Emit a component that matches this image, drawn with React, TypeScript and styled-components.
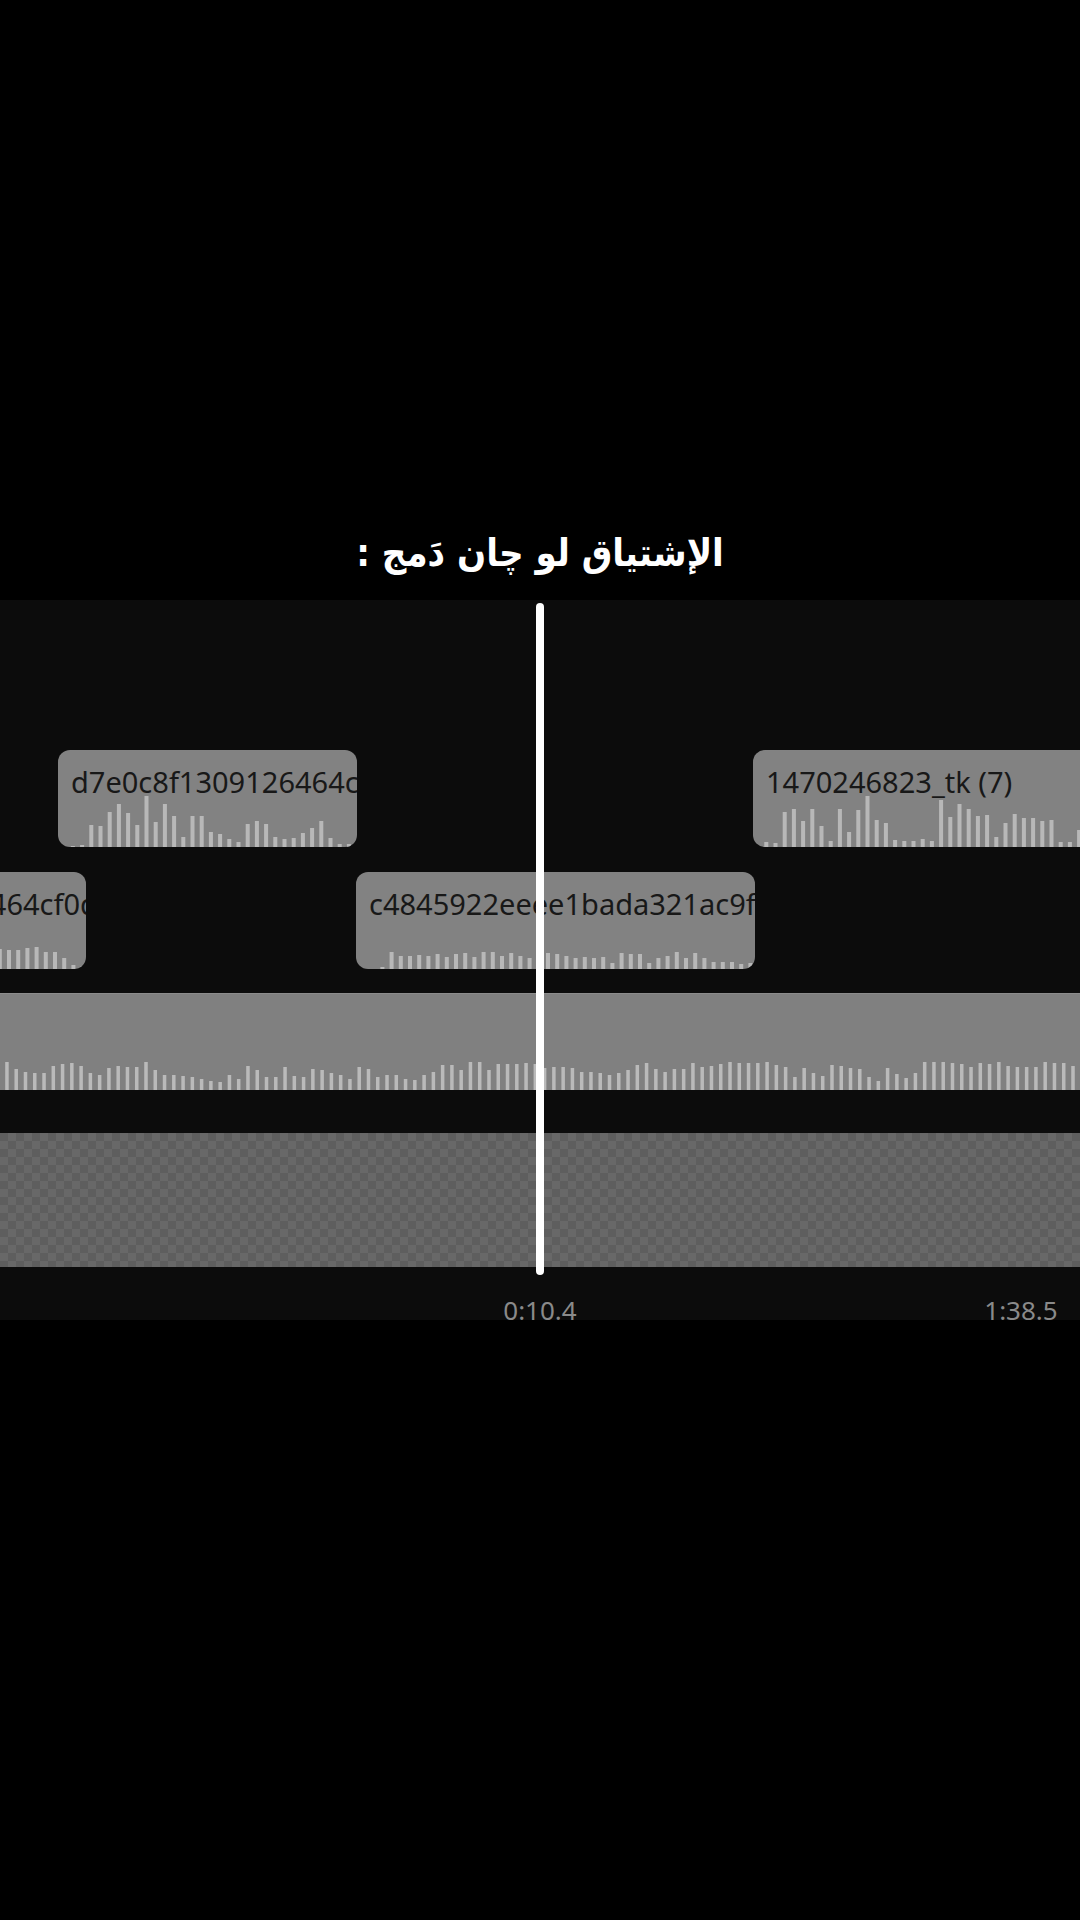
import React from "react";
import styled, { createGlobalStyle } from "styled-components";

const GlobalStyle = createGlobalStyle`
  html, body { margin: 0; padding: 0; background: #000; }
  #root { width: 1080px; height: 1920px; }
`;

const Page = styled.div`
  width: 1080px;
  height: 1920px;
  background: #000;
  display: flex;
  flex-direction: column;
  overflow: hidden;
`;

const Header = styled.div`
  height: 600px;
  display: flex;
  align-items: flex-end;
  justify-content: center;
  padding-bottom: 22px;
  box-sizing: border-box;
`;

const Title = styled.h1`
  margin: 0;
  direction: rtl;
  font-family: "DejaVu Sans Condensed", "DejaVu Sans", sans-serif;
  font-stretch: condensed;
  font-weight: bold;
  font-size: 38px;
  line-height: 1.3;
  color: #fff;
`;

const Panel = styled.div`
  position: relative;
  height: 720px;
  background: #0c0c0c;
  padding-top: 150px;
  box-sizing: border-box;
  display: flex;
  flex-direction: column;
  overflow: hidden;
`;

const ClipRow = styled.div<{ $gap?: number }>`
  position: relative;
  height: 97px;
  margin-top: ${(p) => p.$gap ?? 0}px;
  flex: none;
`;

const Clip = styled.div`
  position: absolute;
  top: 0;
  height: 97px;
  background: #828282;
  border-radius: 12px;
  overflow: hidden;
  display: flex;
  flex-direction: column;
  box-sizing: border-box;
`;

const ClipName = styled.div`
  padding: 17px 0 0 13px;
  font-family: "Noto Sans", "Open Sans", sans-serif;
  font-size: 29px;
  line-height: 29px;
  color: #181818;
  white-space: nowrap;
  flex: none;
`;

const WaveArea = styled.div`
  margin-top: auto;
  height: 51px;
  flex: none;
  svg { display: block; }
`;

const MainTrack = styled.div`
  margin-top: 24px;
  height: 97px;
  flex: none;
  background: #808080;
  border-top: 1px solid #8c8c8c;
  box-sizing: border-box;
  display: flex;
  flex-direction: column;
  justify-content: flex-end;
  svg { display: block; }
`;

const OverlayTrack = styled.div`
  margin-top: 43px;
  height: 134px;
  flex: none;
  background-color: #5e5e5e;
  background-image:
    linear-gradient(45deg, #686868 25%, transparent 25%, transparent 75%, #686868 75%),
    linear-gradient(45deg, #686868 25%, transparent 25%, transparent 75%, #686868 75%);
  background-size: 16px 16px;
  background-position: 0 0, 8px 8px;
`;

const Ruler = styled.div`
  position: relative;
  flex: 1;
`;

const TimeLabel = styled.span`
  position: absolute;
  top: 25px;
  transform: translateX(-50%);
  font-family: "Noto Sans", "Open Sans", sans-serif;
  font-size: 26px;
  color: #8a8a8a;
  white-space: nowrap;
`;

const Playhead = styled.div`
  position: absolute;
  left: 536px;
  top: 3px;
  width: 8px;
  height: 672px;
  background: #fff;
  border-radius: 4px;
`;

type WaveProps = {
  heights: number[];
  start: number;
  step: number;
  barWidth: number;
  width: number;
  height: number;
  color: string;
};

const Wave = ({ heights, start, step, barWidth, width, height, color }: WaveProps) => (
  <svg width={width} height={height} viewBox={`0 0 ${width} ${height}`}>
    {heights.map((h, i) =>
      h > 0 ? (
        <rect
          key={i}
          x={start + i * step}
          y={height - h}
          width={barWidth}
          height={h}
          fill={color}
        />
      ) : null
    )}
  </svg>
);

type ClipData = {
  name: string;
  left: number;
  width: number;
  start: number;
  heights: number[];
};

const row1: ClipData[] = [
  {
    name: "d7e0c8f1309126464cd5a2",
    left: 58,
    width: 299,
    start: 3.7,
    heights: [0, 1, 2, 22, 21, 35, 43, 34, 22, 51, 25, 43, 31, 10, 31, 31, 15, 13, 8, 5, 23, 26, 23, 10, 8, 9, 14, 19, 26, 9, 3, 3, 2],
  },
  {
    name: "1470246823_tk (7)",
    left: 753,
    width: 420,
    start: 2.1,
    heights: [0, 5, 4, 35, 38, 26, 38, 21, 6, 38, 15, 37, 51, 27, 24, 7, 6, 6, 8, 6, 47, 30, 43, 38, 31, 32, 10, 24, 33, 29, 29, 26, 27, 5, 5, 17, 22, 30, 18, 12],
  },
];

const row2: ClipData[] = [
  {
    name: "a9464cf0d1e2b7",
    left: -56,
    width: 142,
    start: 7.8,
    heights: [10, 14, 18, 12, 16, 20, 19, 19, 21, 22, 17, 17, 11, 4, 3],
  },
  {
    name: "c4845922eeee1bada321ac9f0",
    left: 356,
    width: 399,
    start: 6,
    heights: [0, 0, 2, 17, 13, 13, 14, 13, 15, 12, 15, 16, 12, 17, 17, 13, 16, 13, 11, 13, 16, 15, 13, 11, 12, 11, 12, 6, 16, 15, 15, 6, 11, 13, 17, 11, 16, 11, 7, 7, 7, 5, 6],
  },
];

const mainHeights = [
  28, 21, 18, 17, 17, 24, 26, 27, 24, 17, 15, 22, 24, 23, 23, 28, 20, 15, 15, 14, 13, 11, 9, 8, 15, 11, 24, 20, 13, 13, 23, 14, 13, 21, 20, 17, 15, 11, 23, 21, 13, 15, 15, 11, 10, 15, 18, 25, 25, 20, 28, 28, 20, 26, 26, 26, 27, 26,
  22,
  23, 23, 22, 18, 18, 17, 15, 17, 20, 25, 27, 21, 18, 21, 21, 27, 23, 24, 26, 28, 27, 27, 27, 28, 25, 23, 13, 22, 17, 14, 25, 24, 22, 21, 13, 9, 22, 16, 12, 17, 28, 28, 28, 27, 26, 23, 27, 26, 28, 24, 23, 23, 23, 28, 27, 27, 24, 30, 28,
];

const renderClip = (c: ClipData) => (
  <Clip key={c.name} style={{ left: c.left, width: c.width }}>
    <ClipName>{c.name}</ClipName>
    <WaveArea>
      <Wave heights={c.heights} start={c.start} step={9.2} barWidth={4} width={c.width} height={51} color="#b8b8b8" />
    </WaveArea>
  </Clip>
);

const pxPerSec = 481 / 88.1;
const toX = (sec: number) => 540 + (sec - 10.4) * pxPerSec;

const labels = [
  { text: "0:10.4", sec: 10.4 },
  { text: "1:38.5", sec: 98.5 },
];

export default function App() {
  return (
    <Page>
      <GlobalStyle />
      <Header>
        <Title>الإشتياق لو چان دَمج :</Title>
      </Header>
      <Panel>
        <ClipRow>{row1.map(renderClip)}</ClipRow>
        <ClipRow $gap={25}>{row2.map(renderClip)}</ClipRow>
        <MainTrack>
          <Wave heights={mainHeights} start={5.2} step={9.27} barWidth={3.5} width={1080} height={30} color="#bababa" />
        </MainTrack>
        <OverlayTrack />
        <Ruler>
          {labels.map((l) => (
            <TimeLabel key={l.text} style={{ left: toX(l.sec) }}>
              {l.text}
            </TimeLabel>
          ))}
        </Ruler>
        <Playhead />
      </Panel>
    </Page>
  );
}
